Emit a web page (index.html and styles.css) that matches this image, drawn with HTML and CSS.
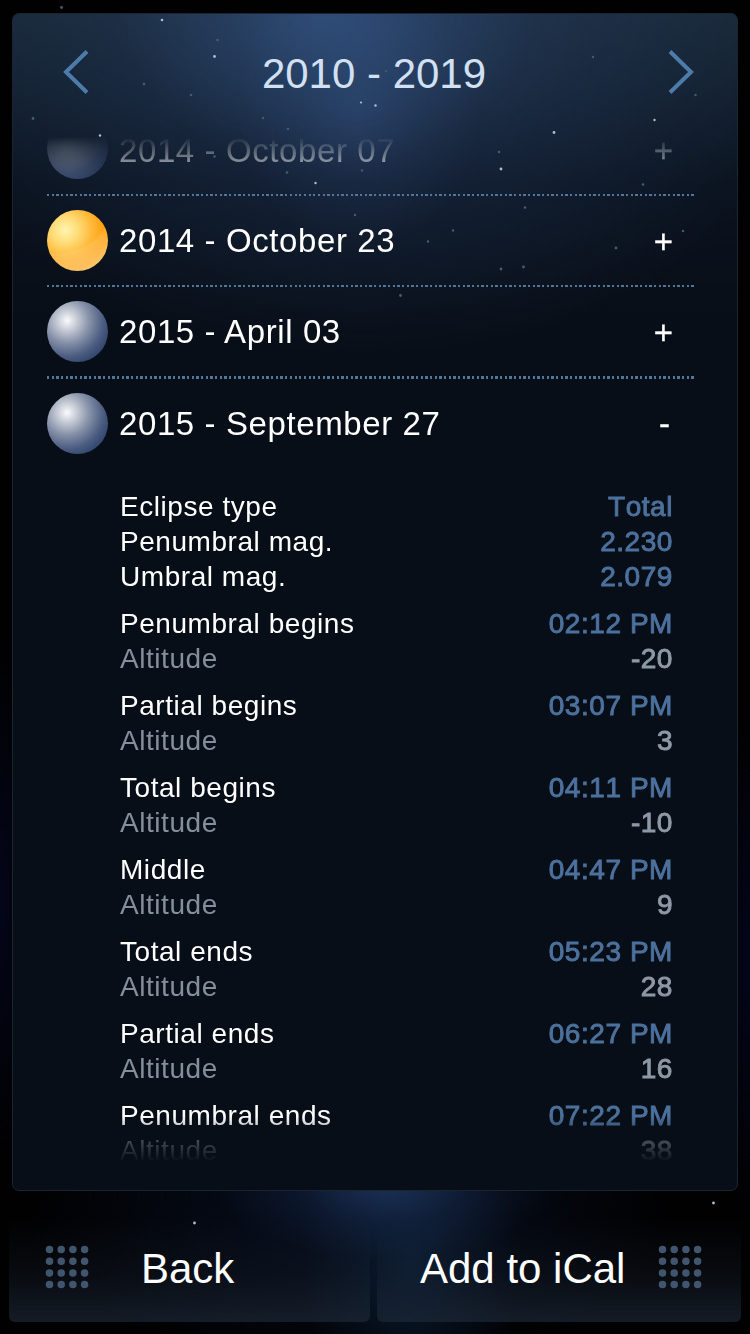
FILE: index.html
```
<!DOCTYPE html>
<html lang="en">
<head>
  <meta charset="UTF-8">
  <title>Eclipses 2010 - 2019</title>
  <link rel="stylesheet" href="styles.css">
</head>
<body>

  <div class="screen">
    <div class="panel">
      <header class="header">
        <svg class="arrow" width="26" height="44" viewBox="0 0 26 44"><path d="M24 1.5L3 22l21 20.500" /></svg>
        <h1>2010 - 2019</h1>
        <svg class="arrow" width="26" height="44" viewBox="0 0 26 44"><path d="M2 1.500L23 22 2 42.500" /></svg>
      </header>

      <div class="list">
        <div class="row">
          <span class="ball moon"></span>
          <span class="date">2014 - October 07</span>
          <span class="toggle">+</span>
        </div>
        <div class="row">
          <span class="ball sun"></span>
          <span class="date">2014 - October 23</span>
          <span class="toggle">+</span>
        </div>
        <div class="row thick">
          <span class="ball moon"></span>
          <span class="date">2015 - April 03</span>
          <span class="toggle">+</span>
        </div>
        <div class="row open">
          <span class="ball moon"></span>
          <span class="date">2015 - September 27</span>
          <span class="toggle minus">-</span>
        </div>

        <div class="details">
          <div class="group">
            <p><span>Eclipse type</span><b>Total</b></p>
            <p><span>Penumbral mag.</span><b>2.230</b></p>
            <p><span>Umbral mag.</span><b>2.079</b></p>
          </div>
          <div class="group">
            <p><span>Penumbral begins</span><b>02:12 PM</b></p>
            <p class="alt"><span>Altitude</span><b>-20</b></p>
          </div>
          <div class="group">
            <p><span>Partial begins</span><b>03:07 PM</b></p>
            <p class="alt"><span>Altitude</span><b>3</b></p>
          </div>
          <div class="group">
            <p><span>Total begins</span><b>04:11 PM</b></p>
            <p class="alt"><span>Altitude</span><b>-10</b></p>
          </div>
          <div class="group">
            <p><span>Middle</span><b>04:47 PM</b></p>
            <p class="alt"><span>Altitude</span><b>9</b></p>
          </div>
          <div class="group">
            <p><span>Total ends</span><b>05:23 PM</b></p>
            <p class="alt"><span>Altitude</span><b>28</b></p>
          </div>
          <div class="group">
            <p><span>Partial ends</span><b>06:27 PM</b></p>
            <p class="alt"><span>Altitude</span><b>16</b></p>
          </div>
          <div class="group">
            <p><span>Penumbral ends</span><b>07:22 PM</b></p>
            <p class="alt"><span>Altitude</span><b>38</b></p>
          </div>
        </div>
      </div>
    </div>

    <nav class="buttons">
      <a class="button back">
        <svg class="dots" width="44" height="44" viewBox="0 0 44 44"><path d="M4.500 4.500h.01M16.200 4.500h.01M27.900 4.500h.01M39.600 4.500h.01M4.500 16.200h.01M16.200 16.200h.01M27.900 16.200h.01M39.600 16.200h.01M4.500 27.900h.01M16.200 27.900h.01M27.900 27.900h.01M39.600 27.900h.01M4.500 39.600h.01M16.200 39.600h.01M27.900 39.600h.01M39.600 39.600h.01" /></svg>
        <span>Back</span>
      </a>
      <a class="button ical">
        <span>Add to iCal</span>
        <svg class="dots" width="44" height="44" viewBox="0 0 44 44"><path d="M4.500 4.500h.01M16.200 4.500h.01M27.900 4.500h.01M39.600 4.500h.01M4.500 16.200h.01M16.200 16.200h.01M27.900 16.200h.01M39.600 16.200h.01M4.500 27.900h.01M16.200 27.900h.01M27.900 27.900h.01M39.600 27.900h.01M4.500 39.600h.01M16.200 39.600h.01M27.900 39.600h.01M39.600 39.600h.01" /></svg>
      </a>
    </nav>

    <!-- stars -->
    <svg class="stars" width="750" height="1334" viewBox="0 0 750 1334">
      <g class="bright">
        <circle cx="162" cy="20" r="1.300" /><circle cx="214.500" cy="56.500" r="1.400" /><circle cx="554" cy="132.500" r="1.400" />
        <circle cx="501" cy="169" r="1.400" /><circle cx="375.500" cy="105.500" r="1.200" /><circle cx="315.500" cy="183" r="1.200" />
        <circle cx="654.500" cy="120" r="1.200" /><circle cx="100" cy="135.500" r="1.200" /><circle cx="361" cy="102.500" r="1.100" />
        <circle cx="713.500" cy="1203" r="1.400" /><circle cx="194.500" cy="1223" r="1.400" />
      </g>
      <g class="dim">
        <circle cx="61.500" cy="7.500" r="1.400" /><circle cx="217.500" cy="40" r="1.300" /><circle cx="144" cy="84" r="1.300" />
        <circle cx="191" cy="95" r="1.300" /><circle cx="33" cy="118.500" r="1.400" /><circle cx="263" cy="118" r="1.200" />
        <circle cx="288" cy="129" r="1.200" /><circle cx="287" cy="172.500" r="1.300" /><circle cx="362" cy="170.500" r="1.200" />
        <circle cx="214.500" cy="156.500" r="1.200" /><circle cx="593" cy="57" r="1.200" /><circle cx="695.500" cy="95" r="1.200" />
        <circle cx="499" cy="152" r="1.300" /><circle cx="643" cy="184.500" r="1.300" /><circle cx="525" cy="207.500" r="1.300" />
        <circle cx="355" cy="215" r="1.200" /><circle cx="453" cy="230.500" r="1.200" /><circle cx="428" cy="241.500" r="1.200" />
        <circle cx="616" cy="248" r="1.400" /><circle cx="683" cy="231" r="1.200" /><circle cx="501" cy="269" r="1.400" />
        <circle cx="523.500" cy="267" r="1.400" /><circle cx="400.500" cy="295.500" r="1.400" /><circle cx="386" cy="71" r="1.100" />
      </g>
    </svg>
  </div>

</body>
</html>
```
FILE: styles.css
```
* {
  box-sizing: border-box;
}
body {
  margin: 0;
  background: #000;
  color: #fff;
  font-family: "Liberation Sans", Helvetica, Arial, sans-serif;
}
.screen {
  position: relative;
  width: 750px;
  height: 1334px;
  padding: 13px 9px 11px;
  overflow: hidden;
  display: flex;
  flex-direction: column;
  background:
    radial-gradient(ellipse 170px 75px at 385px 1185px, rgba(33, 58, 102, .75), rgba(33, 58, 102, .25) 50%, transparent),
    radial-gradient(ellipse 110px 160px at 410px 1265px, rgba(14, 36, 62, .7), rgba(14, 36, 62, .3) 50%, transparent),
    radial-gradient(ellipse 320px 150px at 350px 1215px, rgba(8, 18, 40, .7), rgba(8, 18, 40, .4) 50%, transparent),
    radial-gradient(ellipse 30px 260px at 0 900px, #03061a, transparent),
    radial-gradient(ellipse 30px 260px at 750px 960px, #03061a, transparent),
    #010102;
}
.panel {
  height: 1179px;
  margin: 0 3px;
  border: 1px solid #1a2530;
  border-radius: 7px;
  overflow: hidden;
  background:
    radial-gradient(ellipse 210px 150px at 310px 0, rgba(56, 94, 146, .5), rgba(56, 94, 146, .2) 50%, transparent),
    radial-gradient(ellipse 120px 140px at 345px 95px, rgba(52, 82, 132, .4), rgba(52, 82, 132, .15) 50%, transparent),
    radial-gradient(ellipse 460px 330px at 350px 10px, rgba(42, 66, 106, .7), rgba(42, 66, 106, .3) 50%, transparent),
    linear-gradient(#182735, #121f2d 70px, #0a121e 170px, #080e17 320px);
}
.header {
  height: 123px;
  padding: 0 43px 4px 50px;
  display: flex;
  align-items: center;
  justify-content: space-between;
}
.header h1 {
  margin: 0 9px 0 0;
  font-size: 42px;
  font-weight: normal;
  color: #d2e0f2;
}
.arrow {
  margin-bottom: 3px;
  fill: none;
  stroke: #4d7cab;
  stroke-width: 4;
}

/* eclipse list, fades out at both ends */
.list {
  height: 1025px;
  margin: 0 42px 0 34px;
  overflow: hidden;
  -webkit-mask-image: linear-gradient(transparent, #000 50px, #000 979px, transparent);
  mask-image: linear-gradient(transparent, #000 50px, #000 979px, transparent);
}
.row {
  height: 91px;
  padding: 0 22px 2px 0;
  display: flex;
  align-items: center;
  font-size: 33px;
  letter-spacing: .6px;
  background: repeating-linear-gradient(90deg, #527699 0 2.300px, transparent 2.300px 4.670px) 0 100% / 100% 2px no-repeat;
}
.row:first-child {
  margin-top: -32px;
  padding-bottom: 0;
}
.row:first-child .ball {
  margin-bottom: 4px;
}
.row.thick {
  height: 92px;
  padding-bottom: 3px;
  background-size: 100% 3px;
}
.row.open {
  height: 89px;
  padding-bottom: 0;
  background: none;
}
.ball {
  width: 61px;
  height: 61px;
  margin-right: 11px;
  border-radius: 50%;
}
.moon {
  background: radial-gradient(circle at 33% 32%, #fafafc 0, #c3c8d3 18%, #8792a9 38%, #4b5d81 62%, #2c4069 82%, #2f4470 100%);
}
.sun {
  background:
    radial-gradient(circle at 10px -15px, transparent 57px, rgba(255, 225, 170, .22) 60px, rgba(255, 230, 190, .75) 92px),
    radial-gradient(circle at 30% 33%, #fff5b0 0, #ffdc78 22%, #ffb93a 45%, #ff9c08 68%, #ff9a10 100%);
}
.date {
  flex: 1;
}
.toggle {
  padding-top: 3px;
  letter-spacing: 0;
  -webkit-text-stroke: .3px #fff;
}
.row:first-child .toggle {
  padding-top: 1px;
}
.toggle.minus {
  padding: 0 3px 0 0;
}

.details {
  padding: 21px 22px 0 73px;
  font-size: 28px;
  line-height: 35px;
  letter-spacing: .550px;
}
.group {
  margin-bottom: 12px;
}
.group p {
  margin: 0;
  display: flex;
  justify-content: space-between;
}
.group b {
  color: #4c719d;
  font-weight: normal;
  font-kerning: none;
  -webkit-text-stroke: .9px currentColor;
}
.group .alt,
.group .alt b {
  color: #848f9c;
}
.group .alt b {
  color: #8e99a6;
}

.buttons {
  display: flex;
  gap: 7px;
  padding-top: 9px;
  height: 132px;
}
.button {
  height: 122px;
  padding-top: 12px;
  display: flex;
  align-items: center;
  font-size: 42px;
  border-radius: 6px;
  background: linear-gradient(rgba(30, 40, 56, 0) 15%, rgba(28, 39, 54, .25) 60%, rgba(30, 42, 58, .65));
}
.button span {
  padding-top: 4px;
}
.back {
  width: 361px;
  padding-left: 36px;
}
.back span {
  margin-left: 52px;
}
.ical {
  width: 364px;
  padding-right: 39px;
  padding-left: 43px;
  justify-content: space-between;
}
.dots {
  fill: none;
  stroke: #41566e;
  stroke-width: 7.500;
  stroke-linecap: round;
}

.stars {
  position: absolute;
  top: 0;
  left: 0;
  pointer-events: none;
}
.bright {
  fill: #a9c1d2;
}
.dim {
  fill: #465d70;
}
```
